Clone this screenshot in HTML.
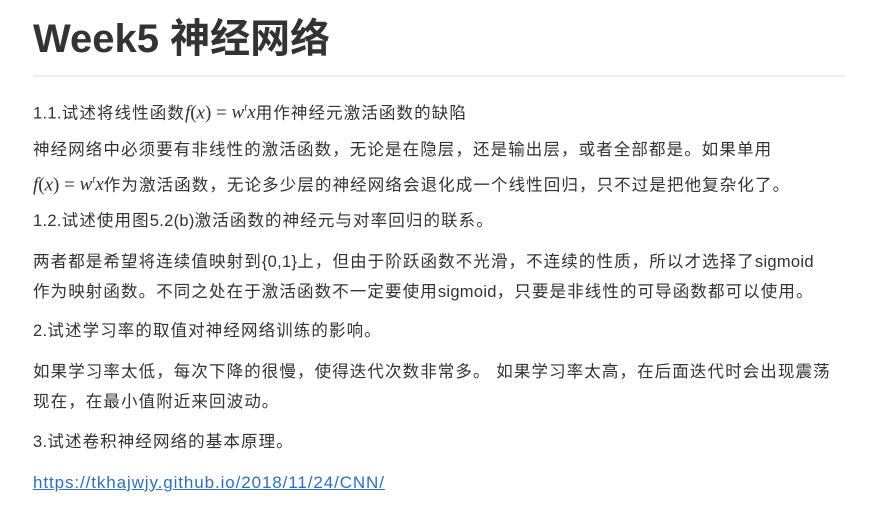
<!DOCTYPE html>
<html><head><meta charset="utf-8"><style>
html,body{margin:0;padding:0;background:#fff;width:870px;height:516px;overflow:hidden}
body{font-family:"Liberation Sans","Noto Sans CJK SC",sans-serif;color:#333}
.l{position:absolute;left:33px;height:30px;line-height:30px;font-size:16.5px;letter-spacing:1.1px;white-space:nowrap}
h1{position:absolute;left:33px;top:14px;margin:0;font-size:40px;line-height:50px;font-weight:bold;color:#333;white-space:nowrap}
hr{position:absolute;left:33px;top:75px;width:812px;margin:0;border:0;border-top:2px solid #eee}
.m{font-family:"Liberation Serif",serif;font-style:italic;font-size:19px;letter-spacing:0}
.n{font-family:"Liberation Serif",serif;font-size:19px;letter-spacing:0}
.s{letter-spacing:0.3px}
a{color:#2a6fc9;text-decoration:underline;letter-spacing:0.9px;font-size:17px}
</style></head><body>
<h1>Week5 神经网络</h1>
<hr>
<div class="l" style="top:93px"><span class="s">1.1.</span>试述将线性函数<span class="m">f</span><span class="n">(</span><span class="m">x</span><span class="n">) = </span><span class="m">w<sup style="font-size:11px">t</sup>x</span>用作神经元激活函数的缺陷</div>
<div class="l" style="top:135px">神经网络中必须要有非线性的激活函数，无论是在隐层，还是输出层，或者全部都是。如果单用</div>
<div class="l" style="top:165px"><span class="m">f</span><span class="n">(</span><span class="m">x</span><span class="n">) = </span><span class="m">w<sup style="font-size:11px">t</sup>x</span>作为激活函数，无论多少层的神经网络会退化成一个线性回归，只不过是把他复杂化了。</div>
<div class="l" style="top:206px"><span class="s">1.2.</span>试述使用图<span class="s">5.2(b)</span>激活函数的神经元与对率回归的联系。</div>
<div class="l" style="top:247px">两者都是希望将连续值映射到<span class="s">{0,1}</span>上，但由于阶跃函数不光滑，不连续的性质，所以才选择了<span class="s">sigmoid</span></div>
<div class="l" style="top:277px">作为映射函数。不同之处在于激活函数不一定要使用<span class="s">sigmoid</span>，只要是非线性的可导函数都可以使用。</div>
<div class="l" style="top:316px"><span class="s">2.</span>试述学习率的取值对神经网络训练的影响。</div>
<div class="l" style="top:357px">如果学习率太低，每次下降的很慢，使得迭代次数非常多。 如果学习率太高，在后面迭代时会出现震荡</div>
<div class="l" style="top:387px">现在，在最小值附近来回波动。</div>
<div class="l" style="top:427px"><span class="s">3.</span>试述卷积神经网络的基本原理。</div>
<div class="l" style="top:468px"><a>https://tkhajwjy.github.io/2018/11/24/CNN/</a></div>
</body></html>
